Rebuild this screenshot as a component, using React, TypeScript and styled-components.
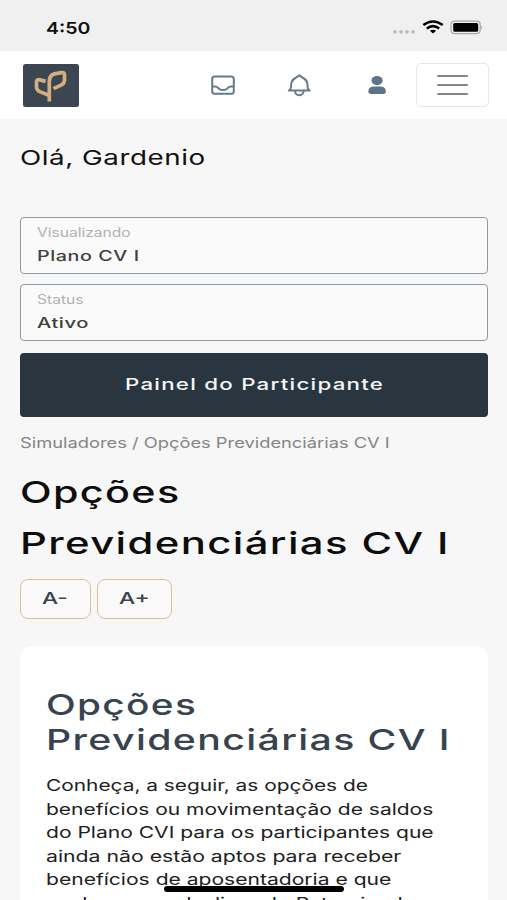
import React, { useLayoutEffect, useRef, useState } from "react";
import styled, { createGlobalStyle } from "styled-components";

const GlobalStyle = createGlobalStyle`
  * { box-sizing: border-box; }
  html, body { margin: 0; padding: 0; }
  body {
    background: #f7f7f7;
    font-family: Inter, "Open Sans", sans-serif;
    color: #111;
    overflow: hidden;
  }
  button { font: inherit; color: inherit; padding: 0; margin: 0; }
  h1, h2, p { margin: 0; font-weight: inherit; }
`;

const Screen = styled.div`
  position: relative;
  width: 507px;
  height: 900px;
  overflow: hidden;
  background: #f7f7f7;
`;

const FitBox = styled.span<{ $width: number }>`
  display: block;
  width: ${(p) => p.$width}px;
  white-space: nowrap;
`;

const FitInner = styled.span`
  display: inline-block;
  transform-origin: 0 50%;
`;

/* Widens a single line of text to the given width, like an extended face. */
function Wide({ width, children }: { width: number; children: string }) {
  const ref = useRef<HTMLSpanElement>(null);
  const [scale, setScale] = useState(1);
  useLayoutEffect(() => {
    if (ref.current) setScale(width / ref.current.offsetWidth);
  }, [width, children]);
  return (
    <FitBox $width={width}>
      <FitInner ref={ref} style={{ transform: `scaleX(${scale})` }}>
        {children}
      </FitInner>
    </FitBox>
  );
}

const StatusBar = styled.div`
  display: flex;
  align-items: center;
  justify-content: space-between;
  height: 51px;
  padding: 4px 24px 0 46px;
  background: #f0f0f0;
`;

const Clock = styled.div`
  font-size: 16.5px;
  font-weight: 600;
  line-height: 20px;
  color: #111;
`;

const StatusIcons = styled.div`
  display: flex;
  align-items: center;
  height: 20px;
`;

const Header = styled.header`
  display: flex;
  align-items: center;
  height: 68px;
  padding: 0 18px 0 23px;
  background: #fff;
`;

const Logo = styled.div`
  width: 55.5px;
  height: 43px;
  border-radius: 2.5px;
  background: #3c4653;
  margin-right: 131.5px;
  svg { display: block; }
`;

const IconButton = styled.button<{ $gap: number }>`
  display: block;
  width: 26px;
  height: 26px;
  border: 0;
  background: none;
  margin-right: ${(p) => p.$gap}px;
  svg { display: block; }
`;

const MenuButton = styled.button`
  display: flex;
  flex-direction: column;
  align-items: center;
  justify-content: center;
  gap: 6.6px;
  width: 73px;
  height: 44px;
  margin-left: auto;
  border: 1px solid #e6e6e6;
  border-radius: 5px;
  background: #fff;
`;

const MenuLine = styled.span`
  width: 31px;
  height: 2px;
  border-radius: 1px;
  background: #858585;
`;

const Main = styled.main`
  padding: 0 19px 0 20px;
`;

const Greeting = styled.h1`
  height: 98px;
  padding: 26px 0 0 0.3px;
  font-size: 20.5px;
  line-height: 26px;
  letter-spacing: 0.4px;
`;

const Field = styled.div`
  height: 57px;
  margin-bottom: 10px;
  padding: 5px 0 0 16px;
  border: 1.5px solid #8d9aa6;
  border-radius: 4px;
  background: #fafafa;
`;

const FieldLabel = styled.div`
  font-size: 12.6px;
  line-height: 19px;
  color: #b0b2b3;
`;

const FieldValue = styled.div`
  padding-top: 3px;
  font-size: 14.2px;
  font-weight: 500;
  line-height: 21px;
  letter-spacing: 0.4px;
  color: #404040;
`;

const PanelButton = styled.button`
  display: flex;
  justify-content: center;
  align-items: center;
  width: 468px;
  height: 64px;
  margin-top: 12px;
  padding-bottom: 3px;
  border: 0;
  border-radius: 4px;
  background: #29353f;
  color: #f4f6f7;
  text-align: left;
  font-size: 16.2px;
  font-weight: 500;
  line-height: 20px;
  letter-spacing: 0.9px;
`;

const Breadcrumb = styled.nav`
  padding: 15.5px 0 0 0.3px;
  font-size: 14.6px;
  line-height: 20px;
  color: #858585;
`;

const Title = styled.h1`
  padding: 13.5px 0 0 0;
  font-size: 30.5px;
  font-weight: 500;
  line-height: 51px;
  letter-spacing: 1px;
  color: #0d0d0d;
`;

const SizeButtons = styled.div`
  display: flex;
  gap: 6px;
  padding-top: 11px;
`;

const SizeButton = styled.button<{ $width: number }>`
  width: ${(p) => p.$width}px;
  height: 40px;
  padding: 0 0 3px 21px;
  border: 1.3px solid #dbc19a;
  border-radius: 8px;
  background: #f9f9f9;
  text-align: left;
  font-size: 16px;
  font-weight: 500;
  line-height: 20px;
  color: #38434f;
`;

const Card = styled.section`
  height: 340px;
  margin-top: 27px;
  padding: 41px 0 0 26.3px;
  border-radius: 12px;
  background: #fff;
`;

const CardTitle = styled.h2`
  font-size: 29px;
  font-weight: 500;
  line-height: 35px;
  letter-spacing: 1px;
  color: #37434f;
`;

const CardText = styled.p`
  padding-top: 17px;
  font-size: 16px;
  line-height: 23.5px;
  color: #202020;
`;

const HomeIndicator = styled.div`
  position: absolute;
  left: 164px;
  top: 886px;
  width: 180px;
  height: 5.5px;
  border-radius: 3px;
  background: #000;
`;

const paragraph: [string, number][] = [
  ["Conheça, a seguir, as opções de", 322],
  ["benefícios ou movimentação de saldos", 387],
  ["do Plano CVI para os participantes que", 388],
  ["ainda não estão aptos para receber", 355.5],
  ["benefícios de aposentadoria e que", 345],
  ["venham a se desligar do Patrocinador", 377],
];

export default function App() {
  return (
    <>
      <GlobalStyle />
      <Screen>
        <StatusBar>
          <Clock><Wide width={45}>4:50</Wide></Clock>
          <StatusIcons>
            <svg width="94" height="20" viewBox="0 0 94 20">
              <g fill="#bcbcbc">
                <circle cx="6" cy="13.8" r="1.9" /><circle cx="12" cy="13.8" r="1.9" />
                <circle cx="18" cy="13.8" r="1.9" /><circle cx="24" cy="13.8" r="1.9" />
              </g>
              <g fill="none" stroke="#000" strokeWidth="2.5">
                <path d="M34.3 7.1 Q44 -.1 53.7 7.1" />
                <path d="M37.8 10.4 Q44 5.9 50.2 10.4" />
              </g>
              <path d="M40.9 12.7 Q44 10.6 47.1 12.7 L44 15.5 Z" fill="#000" />
              <rect x="62" y="3.2" width="29.2" height="12.4" rx="3.5" fill="#f0f0f0" stroke="#a5a5a5" strokeWidth="1.2" />
              <rect x="64.2" y="5" width="25" height="8.8" rx="1.6" fill="#000" />
              <path d="M92.3 7.7 Q94.4 9.4 92.3 11.1 Z" fill="#999" />
            </svg>
          </StatusIcons>
        </StatusBar>
        <Header>
          <Logo>
            <svg width="56" height="43" viewBox="0 0 56 43" fill="none" stroke="#d3ae7e" strokeWidth="3.7" strokeLinejoin="round">
              <path d="M26.3 37.6V17.5Q26.3 11.3 31.5 9.9L38.4 8.6Q41.7 8 41.5 11V16.1Q41.4 19.6 38 21.2L30.5 24.6" />
              <path d="M22.6 17.4L17 15.9Q13.4 15 13.5 18V23.2Q13.7 26.3 16.7 27.6L25.8 31.3" />
            </svg>
          </Logo>
          <IconButton $gap={50} aria-label="Mensagens">
            <svg width="26" height="26" viewBox="0 0 26 26" fill="none" stroke="#647b8e" strokeWidth="2">
              <rect x="2.2" y="4.4" width="21.6" height="17.4" rx="2.6" />
              <path d="M2.5 14.4H5Q7 14.4 8.3 16.1Q9.8 18 13 18T17.7 16.1Q19 14.4 21 14.4H23.5" />
            </svg>
          </IconButton>
          <IconButton $gap={52} aria-label="Notificações">
            <svg width="26" height="26" viewBox="0 0 26 26" fill="none" stroke="#647b8e" strokeWidth="2" strokeLinejoin="round">
              <path d="M2.8 18.6Q5.2 17.6 5.2 12.2C5.2 7.2 9.2 6.4 13.3 3.4C17.4 6.4 21.4 7.2 21.4 12.2Q21.4 17.6 23.8 18.6Z" />
              <path d="M9 19Q9.3 23.2 13.3 23.2T17.6 19" />
            </svg>
          </IconButton>
          <IconButton $gap={0} aria-label="Perfil">
            <svg width="26" height="26" viewBox="0 0 26 26" fill="#5e7587">
              <ellipse cx="13.1" cy="8.6" rx="5.6" ry="4.6" />
              <path d="M4.4 19.3Q4.4 14.6 10 14.6H16.2Q21.8 14.6 21.8 19.3Q21.8 22 19.5 22H6.7Q4.4 22 4.4 19.3Z" />
            </svg>
          </IconButton>
          <MenuButton aria-label="Menu"><MenuLine /><MenuLine /><MenuLine /></MenuButton>
        </Header>
        <Main>
          <Greeting><Wide width={185.5}>Olá, Gardenio</Wide></Greeting>
          <Field>
            <FieldLabel><Wide width={94}>Visualizando</Wide></FieldLabel>
            <FieldValue><Wide width={103}>Plano CV I</Wide></FieldValue>
          </Field>
          <Field>
            <FieldLabel><Wide width={47}>Status</Wide></FieldLabel>
            <FieldValue><Wide width={52.5}>Ativo</Wide></FieldValue>
          </Field>
          <PanelButton><Wide width={259}>Painel do Participante</Wide></PanelButton>
          <Breadcrumb><Wide width={370}>Simuladores / Opções Previdenciárias CV I</Wide></Breadcrumb>
          <Title>
            <Wide width={161}>Opções</Wide>
            <Wide width={429.5}>Previdenciárias CV I</Wide>
          </Title>
          <SizeButtons>
            <SizeButton $width={70.5}><Wide width={25.5}>A-</Wide></SizeButton>
            <SizeButton $width={75}><Wide width={30}>A+</Wide></SizeButton>
          </SizeButtons>
          <Card>
            <CardTitle>
              <Wide width={151}>Opções</Wide>
              <Wide width={405}>Previdenciárias CV I</Wide>
            </CardTitle>
            <CardText>
              {paragraph.map(([line, width]) => (
                <Wide key={line} width={width}>{line}</Wide>
              ))}
            </CardText>
          </Card>
        </Main>
        <HomeIndicator />
      </Screen>
    </>
  );
}
